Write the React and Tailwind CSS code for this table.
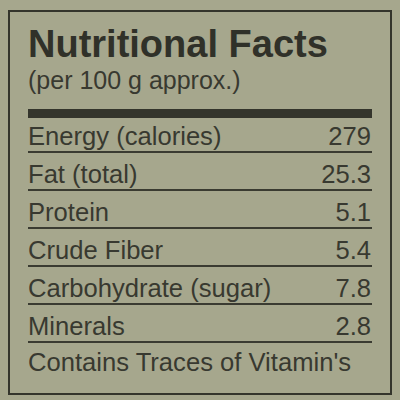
import React from 'react';

const ROWS = [
  { label: 'Energy (calories)', value: '279' },
  { label: 'Fat (total)', value: '25.3' },
  { label: 'Protein', value: '5.1' },
  { label: 'Crude Fiber', value: '5.4' },
  { label: 'Carbohydrate (sugar)', value: '7.8' },
  { label: 'Minerals', value: '2.8' },
];

export default function App() {
  return (
    <div
      className="w-[400px] h-[400px] overflow-hidden bg-[#a6a78d] pt-[10px] pl-[8px] text-[#383930]"
      style={{ fontFamily: '"Liberation Sans", Arial, sans-serif' }}
    >
      <div className="w-[384px] h-[385px] border-2 border-[#34352c] px-[18px] pt-[13px]">
        {/* Heading */}
        <h1 className="text-[38px] leading-[38px] font-bold text-[#303129]">Nutritional Facts</h1>
        <p className="mt-[5px] text-[25px] leading-[24px]">(per 100 g approx.)</p>

        <div className="mt-[17px] h-[9px] bg-[#34352c]" />

        {/* Rows */}
        {ROWS.map(({ label, value }, i) => (
          <div
            key={label}
            className={`flex items-start justify-between pb-[2px] border-b-2 border-[#3a3b31] text-[25.6px] leading-[25px] ${
              i === 0 ? 'pt-[6px]' : 'pt-[9px]'
            }`}
          >
            <span>{label}</span>
            <span className="pr-[1px]">{value}</span>
          </div>
        ))}

        <p className="pt-[7px] text-[25.6px] leading-[25px]">Contains Traces of Vitamin's</p>
      </div>
    </div>
  );
}
